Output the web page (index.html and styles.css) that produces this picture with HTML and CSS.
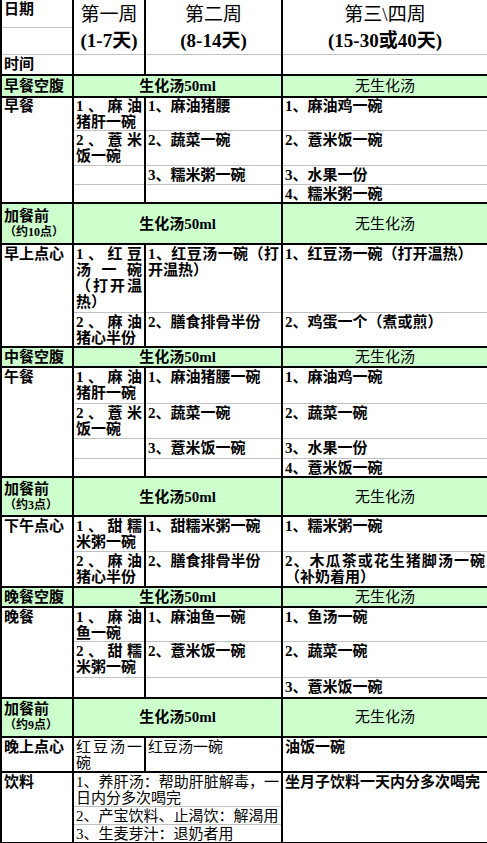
FILE: index.html
```html
<!DOCTYPE html>
<html lang="zh-CN">
<head>
<meta charset="utf-8">
<title>坐月子饮食表</title>
<link rel="stylesheet" href="styles.css">
</head>
<body>
<table class="plan">
  <colgroup>
    <col class="c0"><col class="c1"><col class="c2"><col class="c3">
  </colgroup>
  <tr class="r-h1 first">
    <td class="lbl">日期</td>
    <td rowspan="2" class="wk"><div class="wk-t">第一周</div><div class="wk-d">(1-7天)</div></td>
    <td rowspan="2" class="wk"><div class="wk-t">第二周</div><div class="wk-d">(8-14天)</div></td>
    <td rowspan="2" class="wk"><div class="wk-t">第三\四周</div><div class="wk-d">(15-30或40天)</div></td>
  </tr>
  <tr class="r-h2"><td class="lbl"></td></tr>
  <tr class="r-time"><td class="lbl">时间</td><td></td><td></td><td></td></tr>

  <tr class="g gr r-s"><td class="lbl">早餐空腹</td><td colspan="2" class="soup">生化汤50ml</td><td class="nos">无生化汤</td></tr>
  <tr class="g r-a1 tight"><td rowspan="4" class="lbl">早餐</td><td>1、麻油猪肝一碗</td><td>1、麻油猪腰</td><td>1、麻油鸡一碗</td></tr>
  <tr class="r-a2"><td>2、薏米饭一碗</td><td>2、蔬菜一碗</td><td>2、薏米饭一碗</td></tr>
  <tr class="r-a3"><td></td><td>3、糯米粥一碗</td><td>3、水果一份</td></tr>
  <tr class="r-a4"><td></td><td></td><td>4、糯米粥一碗</td></tr>

  <tr class="g gr r-x1"><td class="lbl"><div>加餐前</div><div class="sm">（约10点）</div></td><td colspan="2" class="soup">生化汤50ml</td><td class="nos">无生化汤</td></tr>
  <tr class="g r-b1"><td rowspan="2" class="lbl">早上点心</td><td>1、红豆汤一碗（打开温热）</td><td>1、红豆汤一碗（打开温热）</td><td>1、红豆汤一碗（打开温热）</td></tr>
  <tr class="r-b2"><td>2、麻油猪心半份</td><td>2、膳食排骨半份</td><td>2、鸡蛋一个（煮或煎）</td></tr>

  <tr class="g gr r-s2"><td class="lbl">中餐空腹</td><td colspan="2" class="soup">生化汤50ml</td><td class="nos">无生化汤</td></tr>
  <tr class="g r-c1"><td rowspan="4" class="lbl">午餐</td><td>1、麻油猪肝一碗</td><td>1、麻油猪腰一碗</td><td>1、麻油鸡一碗</td></tr>
  <tr class="r-c2"><td>2、薏米饭一碗</td><td>2、蔬菜一碗</td><td>2、蔬菜一碗</td></tr>
  <tr class="r-c3"><td></td><td>3、薏米饭一碗</td><td>3、水果一份</td></tr>
  <tr class="r-c4"><td></td><td></td><td>4、薏米饭一碗</td></tr>

  <tr class="g gr r-x2"><td class="lbl"><div>加餐前</div><div class="sm">（约3点）</div></td><td colspan="2" class="soup">生化汤50ml</td><td class="nos">无生化汤</td></tr>
  <tr class="g r-d1"><td rowspan="2" class="lbl">下午点心</td><td>1、甜糯米粥一碗</td><td>1、甜糯米粥一碗</td><td>1、糯米粥一碗</td></tr>
  <tr class="r-d2"><td>2、麻油猪心半份</td><td>2、膳食排骨半份</td><td>2、木瓜茶或花生猪脚汤一碗（补奶着用）</td></tr>

  <tr class="g gr r-s3"><td class="lbl">晚餐空腹</td><td colspan="2" class="soup">生化汤50ml</td><td class="nos">无生化汤</td></tr>
  <tr class="g r-e1"><td rowspan="3" class="lbl">晚餐</td><td>1、麻油鱼一碗</td><td>1、麻油鱼一碗</td><td>1、鱼汤一碗</td></tr>
  <tr class="r-e2"><td>2、甜糯米粥一碗</td><td>2、薏米饭一碗</td><td>2、蔬菜一碗</td></tr>
  <tr class="r-e3"><td></td><td></td><td>3、薏米饭一碗</td></tr>

  <tr class="g gr r-x3"><td class="lbl"><div>加餐前</div><div class="sm">（约9点）</div></td><td colspan="2" class="soup">生化汤50ml</td><td class="nos">无生化汤</td></tr>
  <tr class="g r-f1"><td class="lbl">晚上点心</td><td class="thin">红豆汤一碗</td><td class="thin">红豆汤一碗</td><td>油饭一碗</td></tr>

  <tr class="g r-g1 drink"><td rowspan="3" class="lbl top">饮料</td><td colspan="2" class="thin">1、养肝汤：帮助肝脏解毒，一日内分多次喝完</td><td rowspan="3" class="top">坐月子饮料一天内分多次喝完</td></tr>
  <tr class="r-g2 drink"><td colspan="2" class="thin">2、产宝饮料、止渴饮：解渴用</td></tr>
  <tr class="r-g3 drink last"><td colspan="2" class="thin">3、生麦芽汁：退奶者用</td></tr>
</table>
</body>
</html>
```

FILE: styles.css
```css
html, body {
  margin: 0;
  padding: 0;
  background: #ffffff;
}

.plan {
  border-collapse: collapse;
  table-layout: fixed;
  width: 487px;
  font-family: "Liberation Serif", "Noto Sans CJK SC", serif;
  font-size: 15px;
  font-weight: bold;
  line-height: 16px;
  color: #000;
}

.c0 { width: 72px; }
.c1 { width: 72px; }
.c2 { width: 137px; }
.c3 { width: 206px; }

.plan td {
  border-top: 1px solid #c0c0c0;
  border-bottom: 1px solid #c0c0c0;
  border-left: 2px solid #000;
  border-right: 2px solid #000;
  padding: 1px 2px 0 2px;
  vertical-align: top;
  text-align: justify;
  overflow: hidden;
}

.plan tr.first td { border-top: none; }
.plan tr.g td { border-top: 2px solid #000; }
.plan tr.last td,
.plan tr.r-g1 td { border-bottom: 2px solid #000; }
.plan tr.r-g1 td[colspan] { border-bottom: 1px solid #c0c0c0; }

.plan tr.tight td { padding-top: 0; }

.plan tr.drink td {
  vertical-align: bottom;
  padding-top: 0;
  padding-bottom: 0;
}
.plan tr.drink td.top {
  vertical-align: top;
  padding-top: 1px;
}

.plan .lbl { text-align: left; }

.plan tr.gr td {
  background: #ccffcc;
  vertical-align: middle;
  padding-top: 0;
}
.plan tr.gr td.soup,
.plan tr.gr td.nos { text-align: center; }
.plan .nos { font-weight: normal; }

.plan .sm {
  font-size: 12px;
  line-height: 16px;
}

.plan .thin { font-weight: normal; }

.plan td.wk { text-align: center; padding-top: 2px; }
.wk-t {
  font-size: 19px;
  line-height: 26px;
  font-weight: normal;
}
.wk-d {
  font-size: 19px;
  line-height: 26px;
}

.r-h1 { height: 26px; }
.r-h2 { height: 26px; }
.r-time { height: 20px; }
.r-s { height: 22px; }
.r-a1 { height: 33px; }
.r-a2 { height: 35px; }
.r-a3 { height: 19px; }
.r-a4 { height: 19px; }
.r-x1 { height: 41px; }
.r-b1 { height: 68px; }
.r-b2 { height: 35px; }
.r-s2 { height: 20px; }
.r-c1 { height: 36px; }
.r-c2 { height: 35px; }
.r-c3 { height: 20px; }
.r-c4 { height: 19px; }
.r-x2 { height: 39px; }
.r-d1 { height: 35px; }
.r-d2 { height: 36px; }
.r-s3 { height: 20px; }
.r-e1 { height: 34px; }
.r-e2 { height: 36px; }
.r-e3 { height: 20px; }
.r-x3 { height: 39px; }
.r-f1 { height: 34px; }
.r-g1 { height: 35px; }
.r-g2 { height: 18px; }
.r-g3 { height: 18px; }
```
